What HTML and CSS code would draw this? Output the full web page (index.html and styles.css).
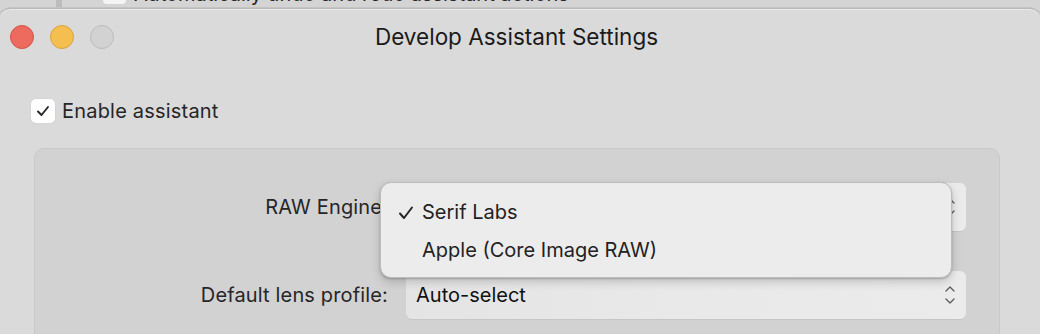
FILE: index.html
```html
<!DOCTYPE html>
<html>
<head>
<meta charset="utf-8">
<link rel="stylesheet" href="styles.css">
</head>
<body>
<div class="desktop">
  <div class="behind">
    <div class="behind-bar"></div>
    <div class="behind-check"></div>
    <div class="behind-text">Automatically undo and redo assistant actions</div>
  </div>

  <div class="window">
    <div class="titlebar">
      <div class="lights">
        <span class="light red"></span>
        <span class="light yellow"></span>
        <span class="light gray"></span>
      </div>
      <div class="title">Develop Assistant Settings</div>
    </div>

    <div class="content">
      <label class="check-row">
        <span class="checkbox">
          <svg width="14" height="12" viewBox="0 0 14 12"><path d="M2 6.5 L5.5 10 L12 2" fill="none" stroke="#262626" stroke-width="1.9" stroke-linecap="round" stroke-linejoin="round"/></svg>
        </span>
        <span class="check-label">Enable assistant</span>
      </label>

      <div class="group">
        <div class="form">
          <div class="label">RAW Engine:</div>
          <div class="popup">
            <span class="popup-text">Serif Labs</span>
            <svg class="chev" width="12" height="20" viewBox="0 0 12 20"><path d="M2 6 L6 2 L10 6 M2 14 L6 18 L10 14" fill="none" stroke="#5a5a5a" stroke-width="1.3" stroke-linecap="round" stroke-linejoin="round"/></svg>
          </div>
          <div class="label">Default lens profile:</div>
          <div class="popup">
            <span class="popup-text">Auto-select</span>
            <svg class="chev" width="12" height="20" viewBox="0 0 12 20"><path d="M2 6 L6 2 L10 6 M2 14 L6 18 L10 14" fill="none" stroke="#5a5a5a" stroke-width="1.3" stroke-linecap="round" stroke-linejoin="round"/></svg>
          </div>
          <div></div>
          <div class="desc">This setting is used for any RAW images opened when</div>
        </div>
      </div>
    </div>

    <div class="menu">
      <div class="menu-item">
        <svg class="tick" width="16" height="16" viewBox="0 0 16 16"><path d="M2 8.5 L6 13 L14 2.5" fill="none" stroke="#262626" stroke-width="2" stroke-linecap="round" stroke-linejoin="round"/></svg>
        <span>Serif Labs</span>
      </div>
      <div class="menu-item">
        <span>Apple (Core Image RAW)</span>
      </div>
    </div>
  </div>
</div>
</body>
</html>
```

FILE: styles.css
```css
* { box-sizing: border-box; }
html, body {
  margin: 0;
  padding: 0;
  width: 1040px;
  height: 334px;
  overflow: hidden;
  font-family: Inter, "Noto Sans", "Liberation Sans", sans-serif;
  color: #262626;
}
.desktop {
  position: relative;
  width: 1040px;
  height: 334px;
  background: #cfcfcf;
  overflow: hidden;
}
.behind {
  position: absolute;
  left: 0;
  top: -20px;
  width: 1040px;
  height: 30px;
  background: #d4d4d4;
}
.behind-bar {
  position: absolute;
  left: 56px;
  top: 0;
  width: 6px;
  height: 30px;
  background: #bcbcbc;
}
.behind-check {
  position: absolute;
  left: 103px;
  top: 0;
  width: 23px;
  height: 24px;
  background: #f4f4f4;
  border-radius: 4px;
}
.behind-text {
  position: absolute;
  left: 134px;
  top: 2px;
  font-size: 20px;
  line-height: 24px;
  color: #262626;
}
.window {
  position: absolute;
  left: -1px;
  top: 8px;
  width: 1042px;
  height: 340px;
  background: #dadada;
  border-radius: 12px 12px 0 0;
  border-top: 1px solid #b9b9b9;
  box-shadow: inset 0 1px 0 #ececec, 0 0 0 1px #c4c4c4;
}
.titlebar {
  display: flex;
  align-items: center;
  height: 55px;
  padding-left: 11px;
}
.lights {
  display: flex;
  gap: 16px;
}
.light {
  width: 24px;
  height: 24px;
  border-radius: 50%;
  display: block;
}
.red { background: #ec6a5e; border: 1px solid #d25448; }
.yellow { background: #f5bf4f; border: 1px solid #d8a240; }
.gray { background: #d2d2d2; border: 1px solid #bcbcbc; }
.title {
  flex: 1;
  text-align: center;
  font-size: 22.5px;
  color: #1b1b1b;
  padding-right: 122px;
}
.content {
  padding: 35px 0 0 32px;
}
.check-row {
  display: flex;
  align-items: center;
  gap: 7px;
  height: 24px;
}
.checkbox {
  width: 24px;
  height: 24px;
  background: #ffffff;
  border-radius: 5px;
  display: flex;
  align-items: center;
  justify-content: center;
  box-shadow: 0 0 0 0.5px #cfcfcf;
}
.check-label {
  font-size: 20px;
  letter-spacing: 0.2px;
  color: #262626;
}
.group {
  margin-top: 25px;
  margin-left: 3px;
  width: 966px;
  height: 200px;
  background: #d2d2d2;
  border: 1px solid #c9c9c9;
  border-radius: 10px;
  padding-top: 34px;
}
.form {
  display: grid;
  grid-template-columns: 353px 560px;
  column-gap: 18px;
  row-gap: 40px;
  align-items: center;
}
.label {
  text-align: right;
  font-size: 20px;
  letter-spacing: 0.15px;
  color: #262626;
}
.popup {
  height: 48px;
  background: linear-gradient(90deg, #e4e4e4 0%, #e9e9e9 50%, #ebebeb 100%);
  border-radius: 6px;
  display: flex;
  align-items: center;
  justify-content: space-between;
  padding: 0 10px 0 10px;
  box-shadow: 0 1px 0 #c6c6c6;
}
.popup-text {
  font-size: 20px;
  color: #111;
}
.desc {
  margin-top: -28px;
  font-size: 20px;
  color: #262626;
}
.menu {
  position: absolute;
  left: 381px;
  top: 173px;
  width: 572px;
  height: 96px;
  background: #ececec;
  border-radius: 11px;
  border: 1px solid #bdbdbd;
  box-shadow: 0 4px 10px rgba(0,0,0,0.18), 0 1px 2px rgba(0,0,0,0.2);
  padding-top: 10px;
}
.menu-item {
  position: relative;
  height: 38px;
  display: flex;
  align-items: center;
  padding-left: 41px;
  font-size: 20px;
  color: #222;
}
.tick {
  position: absolute;
  left: 17px;
  top: 12px;
}
```
